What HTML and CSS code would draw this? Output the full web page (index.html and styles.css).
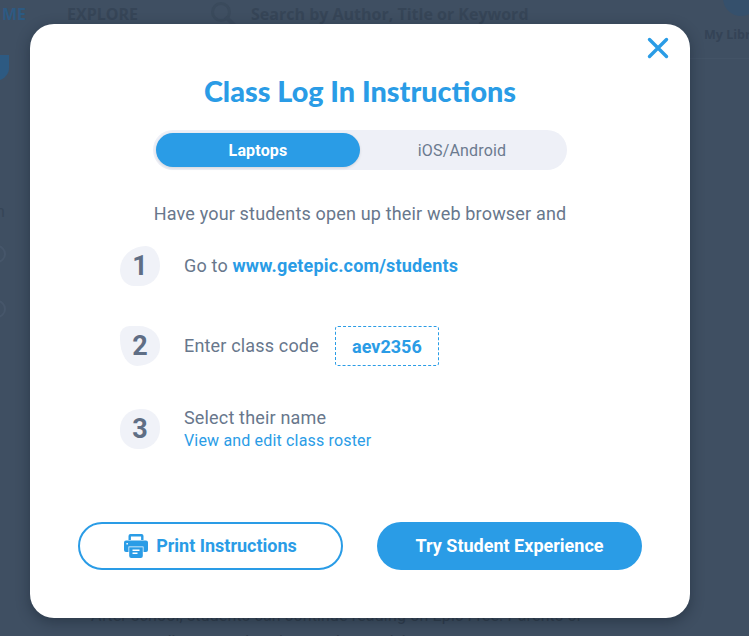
FILE: index.html
```html
<!DOCTYPE html>
<html lang="en">
<head>
  <meta charset="UTF-8" />
  <title>Class Log In Instructions</title>
  <link rel="stylesheet" href="styles.css">
</head>
<body>
  <header class="topbar">
    <span class="nav-home">ME</span>
    <span class="nav-explore">EXPLORE</span>
    <svg class="nav-search-icon" width="26" height="26" viewBox="0 0 26 26"><circle cx="11" cy="11" r="8.5" fill="none" stroke="#3a4a5c" stroke-width="3"/><path d="M17 17l7 7" stroke="#3a4a5c" stroke-width="4" stroke-linecap="round"/></svg>
    <span class="nav-search">Search by Author, Title or Keyword</span>
    <span class="nav-library">My Libr</span>
  </header>
  <div class="nav-badge"></div>
  <div class="nav-rule"></div>
  <div class="side-badge"></div>
  <span class="side-letter">n</span>
  <div class="side-ring ring-1"></div>
  <div class="side-ring ring-2"></div>
  <p class="behind-text">After school, students can continue reading on Epic Free. Parents or</p>
  <p class="behind-text behind-second">guardians can also view student activity.</p>

  <div class="modal">
    <button class="close" aria-label="Close">
      <svg width="22" height="22" viewBox="0 0 22 22"><path d="M2.500 2.500l17 17M19.500 2.500l-17 17" stroke="#2a9ce6" stroke-width="3.400" stroke-linecap="round"/></svg>
    </button>
    <h1>Class Log In Instructions</h1>
    <div class="tabs">
      <div class="tab active">Laptops</div>
      <div class="tab">iOS/Android</div>
    </div>
    <p class="intro">Have your students open up their web browser and</p>

    <div class="step">
      <div class="num blob-1">1</div>
      <div class="step-text">Go to <a class="strong-link">www.getepic.com/students</a></div>
    </div>
    <div class="step">
      <div class="num blob-2">2</div>
      <div class="step-text">Enter class code</div>
      <div class="code">aev2356</div>
    </div>
    <div class="step">
      <div class="num blob-3">3</div>
      <div class="step-text">Select their name<a class="roster">View and edit class roster</a></div>
    </div>

    <div class="actions">
      <button class="btn btn-outline">
        <svg width="24" height="24" viewBox="0 0 24 24"><path fill="#2a9ce6" fill-rule="evenodd" d="M4.500 2A2 2 0 0 1 6.500 0h11a2 2 0 0 1 2 2v5h-2.400V2.400H6.900V7H4.500zM2 6.500h20a2 2 0 0 1 2 2V16a2 2 0 0 1-2 2h-2.500v-5.500h-15V18H2a2 2 0 0 1-2-2V8.500a2 2 0 0 1 2-2zM2.400 9v1.500h1.500V9zM5.200 13.200h13.600V22a2 2 0 0 1-2 2H7.200a2 2 0 0 1-2-2zM8.500 15.500V17h7v-1.500zm0 3V20h5v-1.500z"/></svg>
        <span class="btn-label">Print Instructions</span>
      </button>
      <button class="btn btn-solid"><span class="btn-label">Try Student Experience</span></button>
    </div>
  </div>
</body>
</html>
```

FILE: styles.css
```css
html, body {
  margin: 0; padding: 0;
  height: 636px;
  overflow: hidden;
  font-family: Roboto, sans-serif;
  background: #3f4f62;
}

/* page behind the overlay */
.topbar { display: flex; align-items: center; height: 28px; font-family: "Open Sans", sans-serif; font-weight: 700; color: #364557; white-space: nowrap; }
.nav-home { margin-left: 2px; font-size: 16px; color: #2d5a82; }
.nav-explore { margin-left: 41px; font-size: 16px; }
.nav-search-icon { margin-left: 72px; }
.nav-search { margin-left: 15px; font-size: 16px; }
.nav-library { position: absolute; left: 704px; top: 26px; font-size: 12.500px; font-family: "Open Sans", sans-serif; font-weight: 700; color: #344356; white-space: nowrap; }
.nav-badge { position: absolute; left: 723px; top: -20px; width: 36px; height: 36px; border-radius: 50%; background: #35506c; }
.nav-rule { position: absolute; left: 690px; top: 58px; width: 59px; height: 1px; background: #435366; }
.side-badge { position: absolute; left: -20px; top: 55px; width: 29px; height: 26px; border-radius: 0 0 50% 50%; background: #2d5a82; }
.side-letter { position: absolute; left: -4px; top: 202px; font-size: 16px; color: #364557; }
.side-ring { position: absolute; left: -12px; width: 14px; height: 14px; border: 2px solid #46566a; border-radius: 50%; }
.ring-1 { top: 245px; }
.ring-2 { top: 300px; }
.behind-text { position: absolute; left: 91px; top: 606px; margin: 0; font-size: 16px; letter-spacing: .15px; color: #303d4d; white-space: nowrap; }
.behind-second { left: 130px; top: 632px; }

/* modal */
.modal {
  position: absolute; left: 30px; top: 24px;
  width: 660px; height: 594px;
  box-sizing: border-box;
  padding-top: 48px;
  display: flex; flex-direction: column; align-items: center;
  background: #fff;
  border-radius: 24px;
  box-shadow: 0 4px 14px rgba(20, 30, 45, .45);
}
.close { position: absolute; top: 13px; right: 21px; padding: 0; border: none; background: none; }
h1 { margin: 0; font-family: Lato, sans-serif; font-size: 28.800px; line-height: 38px; font-weight: 900; color: #2a9ce6; }

.tabs { display: flex; box-sizing: border-box; width: 414px; height: 40px; margin-top: 20px; padding: 3px; border-radius: 20px; background: #eef0f7; }
.tab { flex: 1; display: flex; align-items: center; justify-content: center; border-radius: 17px; font-size: 16px; letter-spacing: .17px; color: #6b7a8f; }
.tab.active { flex: none; width: 204px; background: #2a9ce6; color: #fff; font-weight: 700; box-shadow: 0 1px 3px rgba(0, 0, 0, .12); }

.intro { margin: 32px 0 0; font-size: 18px; line-height: 24px; letter-spacing: .17px; color: #68778c; }

.step { display: flex; align-items: center; align-self: flex-start; height: 40px; margin: 40px 0 0 90px; }
.intro + .step { margin-top: 20px; }
.step + .step + .step { margin-top: 43px; }
.num { flex: none; width: 40px; height: 40px; display: flex; align-items: center; justify-content: center; background: #f0f2f8; font-size: 27px; font-weight: 700; color: #5f6e85; }
.blob-1 { border-radius: 65% 35% 50% 35% / 60% 50% 50% 40%; }
.blob-2 { border-radius: 25% 55% 60% 45% / 25% 50% 50% 70%; }
.blob-3 { border-radius: 50% 45% 50% 45%; }
.step-text { margin-left: 24px; font-size: 18px; line-height: 22px; letter-spacing: .17px; color: #68778c; }
.strong-link { font-weight: 700; color: #2a9ce6; }
.roster { display: block; margin-top: 2px; font-size: 16px; line-height: 20px; letter-spacing: .17px; color: #2a9ce6; }
.code { margin-left: 16px; width: 104px; height: 40px; box-sizing: border-box; display: flex; align-items: center; justify-content: center; border: 1px dashed #2a9ce6; border-radius: 3px; font-size: 18px; font-weight: 700; color: #2a9ce6; }

.actions { display: flex; gap: 34px; margin-top: 73px; }
.btn { width: 265px; height: 48px; box-sizing: border-box; display: flex; align-items: center; justify-content: center; gap: 8px; padding: 0; border-radius: 24px; font-family: Roboto, sans-serif; font-size: 18px; font-weight: 700; }
.btn-label { margin-bottom: 2px; }
.btn-outline { border: 2px solid #2a9ce6; background: #fff; color: #2a9ce6; }
.btn-solid { border: none; background: #2a9ce6; color: #fff; }
```
